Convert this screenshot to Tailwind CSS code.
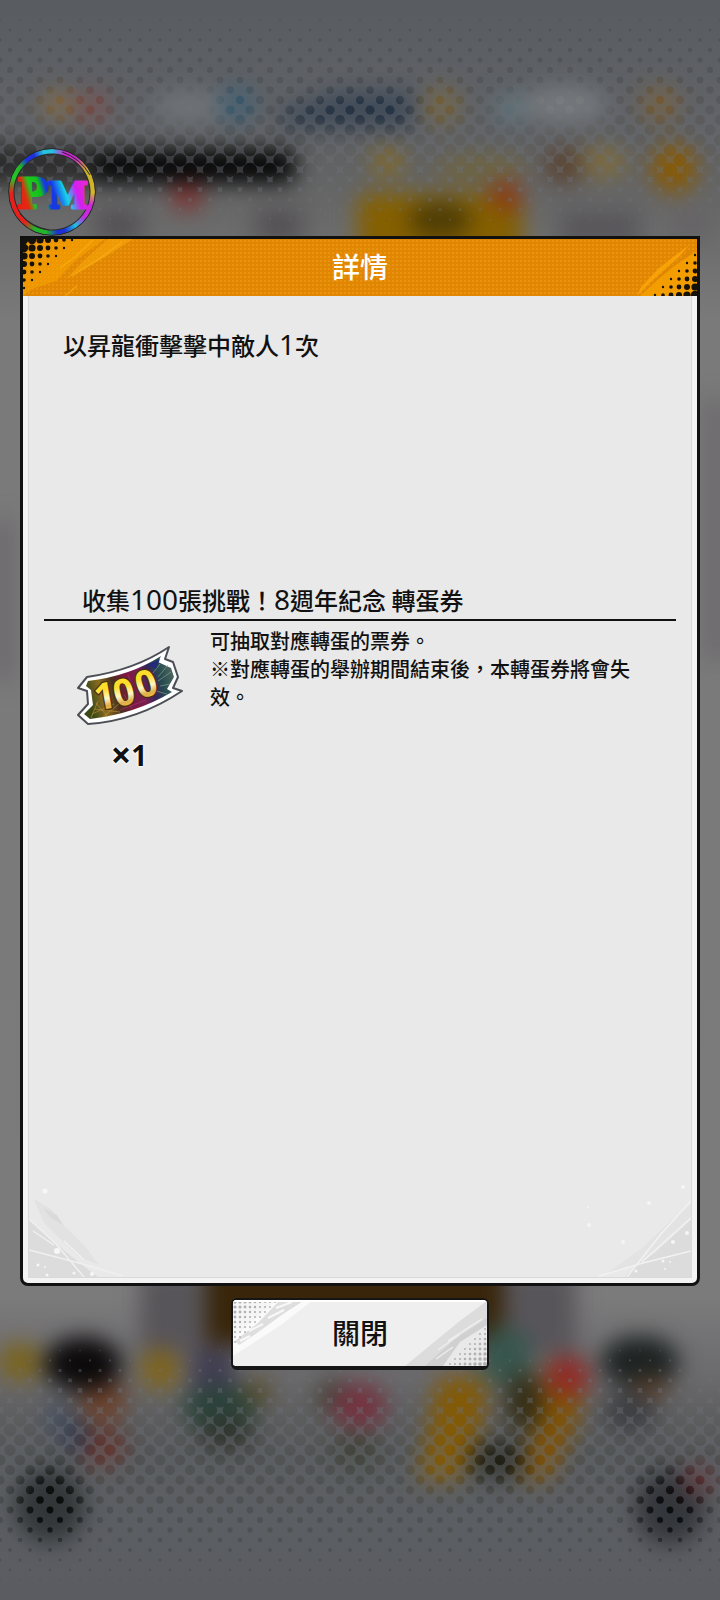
<!DOCTYPE html>
<html lang="zh-Hant">
<head>
<meta charset="utf-8">
<meta name="viewport" content="width=device-width, initial-scale=1">
<title>詳情</title>
<script src="https://cdn.jsdelivr.net/npm/@tailwindcss/browser@4"></script>
</head>
<body class="bg-[#6b6b6d]">
<div class="relative isolate min-h-screen overflow-hidden font-['Noto_Sans_CJK_TC',sans-serif] font-medium text-[#111]">

  <!-- Blurred scene with halftone veil -->
  <svg class="absolute inset-0 -z-10 h-full w-full" viewBox="0 0 720 1600" preserveAspectRatio="xMidYMid slice" aria-hidden="true">
    <defs>
      <linearGradient id="base" x1="0" y1="0" x2="0" y2="1">
        <stop offset="0" stop-color="#4b4f51"/><stop offset=".05" stop-color="#555659"/><stop offset=".09" stop-color="#5f6062"/>
        <stop offset=".13" stop-color="#686868"/><stop offset=".2" stop-color="#7a7a7a"/><stop offset=".81" stop-color="#7c7b7c"/>
        <stop offset=".86" stop-color="#6b6a6c"/><stop offset=".91" stop-color="#515354"/><stop offset="1" stop-color="#4f4f52"/>
      </linearGradient>
      <filter id="soft" x="-100" y="-100" width="920" height="1800" filterUnits="userSpaceOnUse" color-interpolation-filters="sRGB"><feGaussianBlur stdDeviation="11"/></filter>
      <mask id="holes" maskUnits="userSpaceOnUse" x="0" y="0" width="720" height="1600">
        <rect width="720" height="250" fill="#fff"/><rect y="1330" width="720" height="270" fill="#fff"/>
        <g id="dots" fill="#000"></g>
      </mask>
    </defs>
    <rect width="720" height="1600" fill="url(#base)"/>
    <g filter="url(#soft)">
      <ellipse cx="58" cy="104" rx="17" ry="13" fill="#8e6830"/>
      <ellipse cx="92" cy="106" rx="17" ry="15" fill="#7c423c"/>
      <ellipse cx="190" cy="106" rx="38" ry="16" fill="#717679"/>
      <ellipse cx="237" cy="104" rx="17" ry="18" fill="#2c566f"/>
      <path d="M272 114 L340 92 H412 V126 H290 Z" fill="#202f41"/>
      <ellipse cx="442" cy="105" rx="17" ry="19" fill="#79602c"/>
      <ellipse cx="512" cy="108" rx="18" ry="15" fill="#5e767e"/>
      <ellipse cx="565" cy="104" rx="42" ry="18" fill="#7c8083"/>
      <ellipse cx="660" cy="104" rx="19" ry="18" fill="#795a2a"/>
      <rect x="-20" y="149" width="316" height="34" rx="10" fill="#050505"/>
      <rect x="-10" y="143" width="105" height="42" fill="#2e2e2e"/>
      <ellipse cx="187" cy="197" rx="16" ry="13" fill="#803230"/>
      <rect x="96" y="208" width="46" height="34" fill="#545155"/>
      <rect x="256" y="208" width="46" height="34" fill="#545155"/>
      <ellipse cx="388" cy="162" rx="18" ry="15" fill="#806a2c"/>
      <ellipse cx="480" cy="168" rx="48" ry="13" fill="#70643e"/>
      <rect x="358" y="194" width="164" height="70" rx="8" fill="#856000"/>
      <ellipse cx="440" cy="220" rx="32" ry="18" fill="#4d3c06"/>
      <ellipse cx="506" cy="196" rx="16" ry="15" fill="#8d3813"/>
      <ellipse cx="564" cy="165" rx="19" ry="19" fill="#5a4330"/>
      <ellipse cx="604" cy="162" rx="24" ry="16" fill="#7e6c3f"/>
      <ellipse cx="674" cy="168" rx="23" ry="25" fill="#875a06"/>
      <rect x="560" y="210" width="80" height="36" fill="#58565a"/>
      <rect x="676" y="210" width="30" height="30" fill="#656265"/>

      <rect x="-10" y="520" width="24" height="160" fill="#6d6a6d"/>
      <rect x="704" y="400" width="24" height="260" fill="#6d6a6d"/>
      <rect x="140" y="1270" width="436" height="86" fill="#58555a"/>
      <rect x="206" y="1260" width="298" height="84" fill="#38250a"/>
      <ellipse cx="20" cy="1362" rx="22" ry="19" fill="#7a641d"/>
      <ellipse cx="103" cy="1400" rx="24" ry="24" fill="#6c432e"/>
      <ellipse cx="60" cy="1420" rx="15" ry="18" fill="#485060"/>
      <ellipse cx="83" cy="1364" rx="39" ry="27" fill="#0c0a0b"/>
      <ellipse cx="101" cy="1448" rx="26" ry="19" fill="#64332c"/>
      <ellipse cx="77" cy="1438" rx="12" ry="19" fill="#32384a"/>
      <ellipse cx="160" cy="1369" rx="20" ry="21" fill="#7f641c"/>
      <ellipse cx="213" cy="1372" rx="24" ry="25" fill="#413e52"/>
      <ellipse cx="220" cy="1408" rx="38" ry="23" fill="#2b433a"/>
      <ellipse cx="226" cy="1434" rx="27" ry="17" fill="#31342e"/>
      <ellipse cx="258" cy="1392" rx="13" ry="13" fill="#574c26"/>
      <ellipse cx="334" cy="1398" rx="18" ry="19" fill="#46443a"/>
      <ellipse cx="359" cy="1406" rx="27" ry="23" fill="#743340"/>
      <ellipse cx="356" cy="1452" rx="23" ry="18" fill="#404338"/>
      <ellipse cx="505" cy="1356" rx="28" ry="30" fill="#38564e"/>
      <path d="M438 1378 L486 1378 L483 1420 L461 1481 L418 1481 Z" fill="#835a06"/>
      <path d="M545 1360 L587 1380 L574 1430 L549 1481 L512 1481 L537 1430 Z" fill="#815306"/>
      <ellipse cx="524" cy="1403" rx="19" ry="31" fill="#342e17"/>
      <ellipse cx="498" cy="1462" rx="30" ry="19" fill="#1b1b10"/>
      <ellipse cx="568" cy="1376" rx="22" ry="20" fill="#922a26"/>
      <ellipse cx="640" cy="1362" rx="39" ry="26" fill="#1d2322"/>
      <ellipse cx="650" cy="1388" rx="19" ry="11" fill="#5c402b"/>
      <ellipse cx="630" cy="1412" rx="27" ry="21" fill="#3e3f43"/>
      <ellipse cx="50" cy="1506" rx="35" ry="37" fill="#0a0d0c"/>
      <ellipse cx="670" cy="1508" rx="35" ry="37" fill="#0c0d0f"/>
      <ellipse cx="698" cy="1481" rx="15" ry="14" fill="#5c2225"/>
    </g>
    <rect width="720" height="1600" fill="#6b7176" fill-opacity=".42" mask="url(#holes)"/>
  </svg>

  <!-- PM emblem -->
  <div class="absolute top-[148px] left-[8px] size-[88px]">
    <div class="absolute inset-0 rounded-full bg-[#2a2a2a] mask-[radial-gradient(closest-side,transparent_calc(100%-7px),#000_calc(100%-6px))]"></div>
    <div class="absolute inset-px rounded-full bg-[conic-gradient(#25c3dc_0deg,#d022d8_18deg,#c828c8_35deg,#c8b028_58deg,#d2b52c_92deg,#d028dd_108deg,#c82ae0_128deg,#20bfdf_145deg,#1d30d8_162deg,#1d30d8_172deg,#22b52a_188deg,#22b52a_205deg,#e8201c_222deg,#e8201c_268deg,#22c828_290deg,#22b828_308deg,#1c30dc_322deg,#1c30dc_334deg,#25c3dc_348deg,#25c3dc_360deg)] mask-[radial-gradient(closest-side,transparent_calc(100%-5px),#000_calc(100%-4px))]"></div>
    <svg class="absolute inset-0 size-full" viewBox="8 148 88 88" role="img" aria-label="PM">
      <defs>
        <linearGradient id="letters" gradientUnits="userSpaceOnUse" x1="17" y1="206" x2="88" y2="184">
          <stop offset="0" stop-color="#f01818"/><stop offset=".15" stop-color="#e02c10"/><stop offset=".24" stop-color="#1fc91c"/><stop offset=".36" stop-color="#12c01c"/>
          <stop offset=".44" stop-color="#1838e0"/><stop offset=".53" stop-color="#1838e8"/><stop offset=".68" stop-color="#16d5ea"/><stop offset=".82" stop-color="#d41ff0"/><stop offset="1" stop-color="#e82ad0"/>
        </linearGradient>
      </defs>
      <path d="M62 152Q80 158 90 175M20 214Q32 227 49 230" fill="none" stroke="#292929"/>
      <g font-family="'DejaVu Serif','Liberation Serif',serif" font-weight="700" fill="url(#letters)" stroke="url(#letters)" stroke-width="3" stroke-linejoin="round">
        <text x="17" y="208" font-size="41">P</text><text x="48" y="208" font-size="36">M</text>
      </g>
    </svg>
  </div>

  <main class="flex flex-col items-center px-5 pt-[236px] pb-8">
    <section class="flex w-full flex-col overflow-hidden rounded-b-lg border-3 border-[#111] bg-[#f3f3f3]" role="dialog" aria-labelledby="title">
      <header class="relative flex h-[57px] items-center justify-center bg-[#e18600] bg-[radial-gradient(circle,#e99310_1px,transparent_1px)] bg-size-[4px_4px] pb-1">
        <svg class="absolute left-0 top-0 h-full w-[110px]" viewBox="23 239 110 57" aria-hidden="true">
          <path d="M23 239H105L76 260L56 281L32 289L23 296Z" fill="#f6a300" fill-opacity=".6"/>
          <path d="M108 239H133L107 256L66 279L84 260Z" fill="#f7a608" fill-opacity=".6"/>
          <path d="M93 240L75 257L60 268M122 242L99 259L72 276M77 286L65 296" fill="none" stroke="#ffb91c" stroke-opacity=".4" stroke-width="2"/>
          <g id="cornerA" fill="#15120a"></g>
        </svg>
        <h1 id="title" class="text-[28px] leading-10 text-white">詳情</h1>
        <svg class="absolute right-0 top-0 h-full w-[70px]" viewBox="627 239 70 57" aria-hidden="true">
          <path d="M697 251V296H640L668 270Z" fill="#f6a000" fill-opacity=".85"/>
          <path d="M641 287L659 268L689 245L680 256L654 279L637 296Z" fill="#ffad08" fill-opacity=".7"/>
          <path d="M651 284L672 267L690 252" fill="none" stroke="#dd8703" stroke-width="1.5"/>
          <g id="cornerB" fill="#15120a"></g>
        </svg>
      </header>

      <div class="relative mx-[5px] mb-[5px] min-h-[982px] border border-t-0 border-[#d9d9d9] bg-[#e9e9e9] px-[15px] pt-[31px]">
        <svg class="absolute bottom-0 left-0 h-[96px] w-[104px]" viewBox="0 0 104 96" aria-hidden="true">
          <path d="M0 38L18 55L43 76L69 96H0Z" fill="#dcdcdc"/>
          <path d="M5 18L22 28L35 45L55 64L70 84L50 76L30 57L15 42Z" fill="#e2e2e2"/>
          <path d="M14 27L28 34L34 44L22 37Z" fill="#dadada"/>
          <path d="M0 38L27 63L55 96M0 69L50 82L94 95M4 50L25 64M35 60L55 79" fill="none" stroke="#f0f0f0" stroke-width="1.5"/>
          <g fill="#f7f7f7"><circle cx="16" cy="10" r="2.5"/><circle cx="28" cy="70" r="3"/><circle cx="9" cy="84" r="1.5"/><circle cx="16" cy="86" r="1"/><circle cx="18" cy="94" r="1.5"/><circle cx="45" cy="92" r="1.5"/><circle cx="63" cy="93" r="2"/></g>
        </svg>
        <svg class="absolute right-0 bottom-0 h-[96px] w-[110px]" viewBox="0 0 110 96" aria-hidden="true">
          <path d="M110 23L77 60L44 96H110Z" fill="#dcdcdc"/>
          <path d="M110 23L92 38L60 68L25 93L52 86L74 72L110 39Z" fill="#e3e3e3"/>
          <path d="M110 20L80 53L46 96M110 70L62 82L18 95M110 37L61 81" fill="none" stroke="#f2f2f2" stroke-width="1.5"/>
          <g fill="#f5f5f5"><circle cx="102" cy="6" r="2"/><circle cx="68" cy="22" r="2"/><circle cx="8" cy="44" r="2"/><circle cx="42" cy="61" r="2"/><circle cx="92" cy="61" r="2"/><circle cx="106" cy="52" r="2"/><circle cx="82" cy="80" r="1.5"/><circle cx="89" cy="81" r="1"/><circle cx="84" cy="88" r="1"/><circle cx="55" cy="90" r="1.5"/><circle cx="7" cy="26" r="1"/></g>
        </svg>

        <p class="px-[19px] text-2xl leading-9">以昇龍衝擊擊中敵人<span class="font-['Noto_Sans'] text-[28px] leading-none font-normal">1</span>次</p>

        <h2 class="mt-[221px] border-b-2 border-[#111] pb-[3px] pl-[38px] text-2xl leading-8">收集<span class="font-['Noto_Sans'] text-[28px] leading-none font-normal">100</span>張挑戰！<span class="font-['Noto_Sans'] text-[28px] leading-none font-normal">8</span>週年紀念 轉蛋券</h2>
        <div class="flex">
          <div class="flex w-[166px] shrink-0 flex-col items-center pt-6 pl-1">
            <svg class="h-[82px] w-[108px]" viewBox="75 644 108 82" role="img" aria-label="100">
              <defs>
                <linearGradient id="foil" x1="0" y1=".4" x2="1" y2="0.2">
                  <stop offset="0" stop-color="#3c4a17"/><stop offset=".15" stop-color="#8a6b20"/><stop offset=".3" stop-color="#4a301f"/><stop offset=".45" stop-color="#7c1741"/><stop offset=".6" stop-color="#77204f"/><stop offset=".72" stop-color="#33265a"/><stop offset=".84" stop-color="#284d52"/><stop offset="1" stop-color="#536b60"/>
                </linearGradient>
                <linearGradient id="gold" x1="0" y1="0" x2="0" y2="1">
                  <stop offset="0" stop-color="#f5e021"/><stop offset=".4" stop-color="#ffdd2c"/><stop offset=".58" stop-color="#fff6c8"/><stop offset=".72" stop-color="#e0ae48"/><stop offset="1" stop-color="#ffe12a"/>
                </linearGradient>
              </defs>
              <path d="M87 676Q135 669 169 646L165 658L173 661L178 676L173 687L182 690Q137 720 88 723L78 714L88 703L87 690L78 687Z" fill="#fff" stroke="#4b4e55" stroke-width="2" stroke-linejoin="round"/>
              <path d="M88 680Q130 675 161 655L158 661L171 667L174 676L167 688L172 691Q135 713 90 718L84 713L93 704L91 689L86 685Z" fill="url(#foil)"/>
              <g fill="none" stroke-width="1" stroke-opacity=".6">
                <path d="M92 713L114 703M94 708L120 711M96 702L108 716M103 716L125 698M91 717L98 700" stroke="#c2923a"/>
                <path d="M158 680L171 671M158 676L168 664M160 685L170 683M156 690L167 693M153 672L160 663" stroke="#8da68c"/>
                <path d="M116 678L127 688M128 674L132 684M120 709L146 699M132 708L124 693" stroke="#b13570"/>
              </g>
              <path d="M147 664L160 658L156 668Z" fill="#242c79"/>
              <g font-family="'Open Sans','Noto Sans',sans-serif" font-weight="700" font-size="37" text-anchor="middle" stroke="#4a2c12" stroke-width="2.5" paint-order="stroke" fill="url(#gold)">
                <text transform="translate(107 708) rotate(-10)">1</text>
                <text transform="translate(127 704) rotate(-14)">0</text>
                <text transform="translate(150 695) rotate(-18)">0</text>
              </g>
            </svg>
            <p class="mt-2 flex h-10 items-center font-['Noto_Sans'] text-[28px] leading-10 font-bold text-shadow-[0_0_3px_#fff,0_0_3px_#fff,0_0_2px_#fff]"><span class="text-[36px]">×</span><span>1</span></p>
          </div>
          <p class="mr-8 pt-[6px] text-xl leading-7">可抽取對應轉蛋的票券。<br>※對應轉蛋的舉辦期間結束後，本轉蛋券將會失效。</p>
        </div>
      </div>
    </section>

    <button type="button" class="relative mt-3 flex h-[72px] w-[258px] items-center justify-center overflow-hidden rounded-md border-2 border-b-4 border-[#151515] bg-[#efefef] pb-[2px] text-[28px]">
      <svg class="absolute inset-0 h-full w-full" viewBox="233 1300 254 66" preserveAspectRatio="none" aria-hidden="true">
        <path d="M233 1300H313L281 1325L233 1356Z" fill="#fafafa"/>
        <path d="M280 1300H305L283 1314L257 1333L239 1345L235 1341L258 1323Z" fill="#dedede"/>
        <path d="M276 1308L292 1302M268 1318L284 1310M249 1331L263 1324M240 1341L250 1336" stroke="#f8f8f8" stroke-width="2"/>
        <path d="M233 1300H277L233 1338Z" fill="#f5f5f5"/>
        <path d="M487 1301L461 1320L405 1366H487Z" fill="#dcdcdc"/>
        <path d="M487 1318L455 1339L425 1366H446L487 1336Z" fill="#d0d0d0"/>
        <path d="M487 1325L460 1342L443 1366H487Z" fill="#e9e9e9"/>
        <path d="M438 1350L459 1335M448 1341L482 1319M436 1359L453 1347" stroke="#ededed" stroke-width="1.5"/>
        <g id="btnDots" fill="#b0b0b0"></g>
        <path d="M233 1301H487" stroke="#fff" stroke-width="2"/>
      </svg>
      <span class="relative">關閉</span>
    </button>
  </main>
</div>

<script>
  const dot = (id, x, y, r) => {
    const c = document.createElementNS('http://www.w3.org/2000/svg', 'circle');
    c.setAttribute('cx', x); c.setAttribute('cy', y); c.setAttribute('r', r);
    document.getElementById(id).appendChild(c);
  };
  // Veil holes grow towards the middle of the screen
  for (let y = 10; y < 1600; y += 10) {
    const edge = Math.min(y, 1600 - y);
    if (edge > 280) continue;
    const r = Math.min(11, edge * (y < 800 ? 0.042 : 0.038));
    for (let x = (y / 10 % 2) * 10; x <= 720; x += 20) dot('dots', x, y, r);
  }
  // Header corner halftones
  for (let i = 0; i < 7; i++) for (let j = 0; j < 7; j++) {
    if (i + j <= 6) dot('cornerA', 24 + 8 * i, 240 + 8 * j, Math.min(4.2, 4.8 - 0.6 * (i + j)));
    if (i + j <= 5) dot('cornerB', 695 - 8 * i, 295 - 8 * j, 4.2 - 0.6 * (i + j));
  }
  // Button corner halftones
  for (let i = 0; i < 10; i++) for (let j = 0; j < 9; j++) {
    if (i + j < 9) dot('btnDots', 235 + 5 * i, 1302 + 5 * j, 1.7 - 0.1 * (i + j));
    if (i + j < 8) dot('btnDots', 485 - 5 * i, 1364 - 5 * j, 2 - 0.15 * (i + j));
  }
</script>
</body>
</html>
